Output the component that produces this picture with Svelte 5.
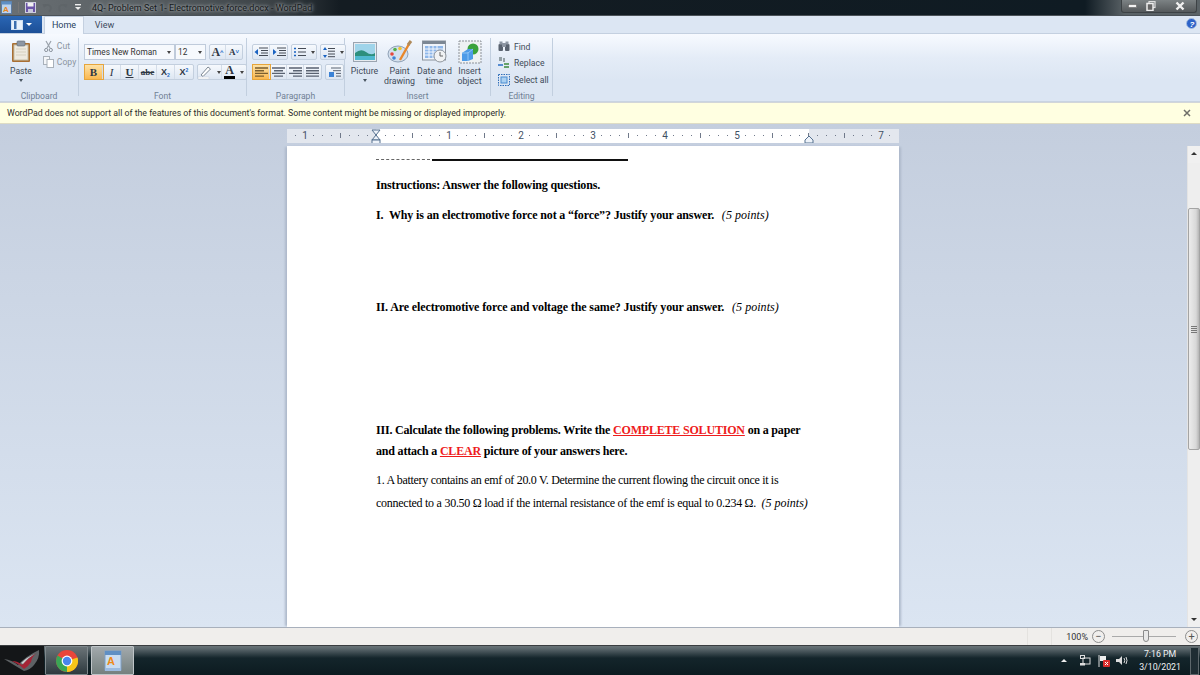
<script>
const clipboard = [
	{ label: 'Cut' },
	{ label: 'Copy' }
];
const insertItems = [
	{ id: 'picture', lines: ['Picture', '▾'] },
	{ id: 'paint', lines: ['Paint', 'drawing'] },
	{ id: 'date', lines: ['Date and', 'time'] },
	{ id: 'object', lines: ['Insert', 'object'] }
];
// ruler marks, in inches from left margin
const rulerMarks = [];
for (let i = -1.125; i < 7.2; i += 0.125) rulerMarks.push(i);
const rulerLabel = (m) => (Number.isInteger(m) && m !== 0 && m !== 6 ? String(Math.abs(m)) : null);
</script>

<div class="window">
	<header class="titlebar">
		<div class="qat">
			<svg width="11" height="13" viewBox="0 0 11 13"><rect x="0.5" y="0.5" width="10" height="12" fill="#bcd3ee" stroke="#5c7ca3"/><rect x="0.5" y="0.5" width="10" height="3" fill="#5f8fc4"/><text x="2" y="11" font-size="8" fill="#e8861d" font-family="Liberation Sans" font-weight="bold">A</text></svg>
			<span class="qsep"></span>
			<svg width="11" height="11" viewBox="0 0 11 11"><rect x="0.5" y="0.5" width="10" height="10" fill="#6b55a8" stroke="#cfcfe0"/><rect x="2.5" y="1" width="6" height="3.5" fill="#f2f2f2"/><rect x="3" y="7" width="5" height="3.5" fill="#c8c8dc"/></svg>
			<svg width="10" height="10" viewBox="0 0 10 10"><path d="M2.5 3 Q6 0.5 8.5 3.5 Q9.5 7 7 8.5" fill="none" stroke="#5f6569" stroke-width="1.8"/><path d="M0.5 1 L4.5 1 L2 5 Z" fill="#5f6569"/></svg>
			<svg width="10" height="10" viewBox="0 0 10 10"><path d="M7.5 3 Q4 0.5 1.5 3.5 Q0.5 7 3 8.5" fill="none" stroke="#5f6569" stroke-width="1.8"/><path d="M9.5 1 L5.5 1 L8 5 Z" fill="#5f6569"/></svg>
			<svg width="8" height="9" viewBox="0 0 8 9" class="qmore"><rect x="1" y="1" width="6" height="1.4" fill="#eee"/><path d="M1 4 L7 4 L4 7 Z" fill="#eee"/></svg>
			<span class="title">4Q- Problem Set 1- Electromotive force.docx - WordPad</span>
		</div>
		<div class="controls">
			<svg width="9" height="4" viewBox="0 0 9 4"><rect width="8" height="3" x="0.5" y="0.5" fill="#f2f2f2" stroke="#555" stroke-width="0.5"/></svg>
			<svg width="10" height="10" viewBox="0 0 10 10"><rect x="3" y="0.5" width="6" height="6" fill="none" stroke="#ddd" stroke-width="1.2"/><rect x="1" y="2.5" width="6" height="7" fill="#666" stroke="#eee" stroke-width="1.5"/></svg>
			<svg class="close" width="10" height="10" viewBox="0 0 10 10"><path d="M1.5 1.5 L8.5 8.5 M8.5 1.5 L1.5 8.5" stroke="#f0f0f0" stroke-width="2.4"/></svg>
		</div>
	</header>

	<nav class="tabs">
		<button class="file">
			<svg width="12" height="10" viewBox="0 0 12 10"><rect width="11" height="9" x="0.5" y="0.5" fill="#eaf2fb" stroke="#cfe0f2"/><rect x="3" y="1" width="2.5" height="8" fill="#3c6fae"/></svg>
			<span class="caret-w"></span>
		</button>
		<div class="tab active">Home</div>
		<div class="tab">View</div>
		<svg class="help" width="11" height="11" viewBox="0 0 11 11"><circle cx="5.5" cy="5.5" r="5" fill="#2c62c8" stroke="#a7bfe2"/><text x="3.5" y="8.5" font-size="8" font-weight="bold" font-style="italic" fill="#fff" font-family="Liberation Sans">?</text></svg>
	</nav>

	<section class="ribbon">
		<div class="group g-clip">
			<div class="group-body clip-body">
				<div class="paste">
					<svg width="20" height="23" viewBox="0 0 20 23"><rect x="1" y="3" width="18" height="19" rx="1" fill="#a96f33"/><rect x="3" y="5" width="14" height="15" fill="#eeeae0" stroke="#c6bfa8"/><rect x="6" y="1" width="8" height="5" rx="1" fill="#8d97a4" stroke="#5f6873" stroke-width="0.6"/><path d="M5 9h10M5 12h10M5 15h10" stroke="#d6d0bf"/></svg>
					<span class="ptext">Paste</span>
					<span class="caret"></span>
				</div>
				<div class="clip-list">
					{#each clipboard as c, i}
						<div class="clip-item">
							{#if i === 0}
								<svg width="9" height="12" viewBox="0 0 9 12"><path d="M2 1 L6 8 M7 1 L3 8" stroke="#9aa2ab" stroke-width="1.2"/><circle cx="2.2" cy="10" r="1.6" fill="none" stroke="#8a929c"/><circle cx="6.8" cy="10" r="1.6" fill="none" stroke="#8a929c"/></svg>
							{:else}
								<svg width="11" height="12" viewBox="0 0 11 12"><rect x="0.5" y="0.5" width="6" height="8" fill="#f4f6f9" stroke="#a9b1ba"/><rect x="4" y="3.5" width="6.5" height="8" fill="#fff" stroke="#a9b1ba"/></svg>
							{/if}
							<span>{c.label}</span>
						</div>
					{/each}
				</div>
			</div>
			<div class="group-name">Clipboard</div>
		</div>

		<div class="group g-font">
			<div class="group-body font-body">
				<div class="row">
					<div class="combo fontname">Times New Roman<span class="mini"></span></div>
					<div class="combo fontsize">12<span class="mini"></span></div>
					<div class="btns">
						<span class="b grow serif">A<sup>^</sup></span>
						<span class="b grow small serif">A<sup>˅</sup></span>
					</div>
				</div>
				<div class="row">
					<div class="btns">
						<span class="b on serif bold">B</span>
						<span class="b serif ital">I</span>
						<span class="b serif bold und">U</span>
						<span class="b serif strike">abe</span>
						<span class="b sub">X<small>2</small></span>
						<span class="b sup">X<small>2</small></span>
					</div>
					<div class="btns color">
						<span class="b wide">
							<svg width="14" height="13" viewBox="0 0 14 13"><path d="M3 9 L10 1 L12.5 3 L5 10.5 Z" fill="#fff" stroke="#7d8894"/><rect y="11" width="11" height="2" fill="#fff" stroke="#c5ccd6" stroke-width="0.5"/></svg>
							<span class="mini"></span>
						</span>
						<span class="b wide">
							<span class="colora">A</span>
							<span class="mini"></span>
						</span>
					</div>
				</div>
			</div>
			<div class="group-name">Font</div>
		</div>

		<div class="group g-para">
			<div class="group-body font-body">
				<div class="row">
					<div class="btns">
						<span class="b para"><svg width="14" height="10" viewBox="0 0 14 10"><path d="M5 1h9M7 3.5h7M7 6h7M5 8.5h9" stroke="#454b55"/><path d="M4 2 L0.5 5 L4 8 Z" fill="#1a63c2"/></svg></span>
						<span class="b para"><svg width="14" height="10" viewBox="0 0 14 10"><path d="M5 1h9M7 3.5h7M7 6h7M5 8.5h9" stroke="#454b55"/><path d="M1 2 L4.5 5 L1 8 Z" fill="#1a63c2"/></svg></span>
					</div>
					<div class="btns">
						<span class="b wide"><svg width="12" height="10" viewBox="0 0 12 10"><path d="M4 1.5h8M4 5h8M4 8.5h8" stroke="#454b55"/><path d="M0 1.5h2M0 5h2M0 8.5h2" stroke="#1a63c2" stroke-width="1.6"/></svg><span class="mini"></span></span>
					</div>
					<div class="btns">
						<span class="b wide"><svg width="12" height="11" viewBox="0 0 12 11"><path d="M5 1.5h7M5 4.2h7M5 7h7M5 9.7h7" stroke="#454b55"/><path d="M2 0 L4 3 H0 Z M2 11 L4 8 H0 Z" fill="#1a63c2"/></svg><span class="mini"></span></span>
					</div>
				</div>
				<div class="row">
					<div class="btns">
						<span class="b para on"><svg width="13" height="11" viewBox="0 0 13 11"><path d="M0 1h13M0 3.7h9M0 6.4h13M0 9.1h9" stroke="#7a5e30" stroke-width="1.4"/></svg></span>
						<span class="b para"><svg width="13" height="11" viewBox="0 0 13 11"><path d="M0 1h13M2 3.7h9M0 6.4h13M2 9.1h9" stroke="#596271" stroke-width="1.4"/></svg></span>
						<span class="b para"><svg width="13" height="11" viewBox="0 0 13 11"><path d="M0 1h13M4 3.7h9M0 6.4h13M4 9.1h9" stroke="#596271" stroke-width="1.4"/></svg></span>
						<span class="b para"><svg width="13" height="11" viewBox="0 0 13 11"><path d="M0 1h13M0 3.7h13M0 6.4h13M0 9.1h13" stroke="#596271" stroke-width="1.4"/></svg></span>
					</div>
					<div class="btns">
						<span class="b para"><svg width="13" height="11" viewBox="0 0 13 11"><path d="M3 1h10M5 3.7h8M8 6.4h5M8 9.1h5" stroke="#596271"/><rect x="1" y="5" width="5" height="5" fill="#3b82d6"/></svg></span>
					</div>
				</div>
			</div>
			<div class="group-name">Paragraph</div>
		</div>

		<div class="group g-insert">
			<div class="group-body insert-body">
				{#each insertItems as it}
					<div class="ins">
						{#if it.id === 'picture'}
							<svg width="24" height="20" viewBox="0 0 24 20"><rect x="0.5" y="0.5" width="23" height="19" fill="#e7ebf0" stroke="#9aa4b0"/><rect x="2" y="2" width="20" height="16" fill="#9fd4ea"/><path d="M2 11 Q8 6 13 10 T22 11 V18 H2 Z" fill="#2c8f7d"/><rect x="2" y="14" width="20" height="4" fill="#4fb8cf"/></svg>
						{:else if it.id === 'paint'}
							<svg width="26" height="24" viewBox="0 0 26 24"><ellipse cx="11" cy="14" rx="10" ry="8" fill="#d4e0ee" stroke="#8fa1b6"/><circle cx="5" cy="14" r="1.8" fill="#e5483c"/><circle cx="8" cy="9.5" r="1.8" fill="#54b04a"/><circle cx="13" cy="8.5" r="1.8" fill="#f2c431"/><circle cx="7" cy="18" r="1.8" fill="#3e83d6"/><path d="M13 20 L22 4" stroke="#e8862a" stroke-width="2.4"/><path d="M21 5 L24 1" stroke="#b08a5a" stroke-width="3"/></svg>
						{:else if it.id === 'date'}
							<svg width="26" height="24" viewBox="0 0 26 24"><rect x="0.5" y="1" width="23" height="19" fill="#eef3fa" stroke="#8a929c"/><rect x="1" y="1" width="22" height="3" fill="#7c8794"/><rect x="3" y="6" width="18" height="12" fill="#8eb7ea"/><path d="M3 9h18M3 12h18M3 15h18M7 6v12M11 6v12M15 6v12" stroke="#f3f7fd"/><circle cx="18" cy="16" r="6" fill="#f0f2f4" stroke="#8e959d"/><path d="M18 12v4h3" fill="none" stroke="#666"/></svg>
						{:else}
							<svg width="24" height="24" viewBox="0 0 24 24"><rect x="1" y="1" width="22" height="22" fill="#eef1f3" stroke="#8c9198" stroke-dasharray="2 1"/><circle cx="15" cy="9" r="5.5" fill="#3aa23c"/><path d="M4 13 L10 9 H15 V19 L10 21 H4 Z" fill="#4c9be8"/><path d="M10 12 V21 M4 13 H10 L15 9" stroke="#8fc4f5" fill="none"/></svg>
						{/if}
						<div class="ins-label">
							<span>{it.lines[0]}</span>
							{#if it.lines[1] === '▾'}
								<span class="caret"></span>
							{:else}
								<span>{it.lines[1]}</span>
							{/if}
						</div>
					</div>
				{/each}
			</div>
			<div class="group-name">Insert</div>
		</div>

		<div class="group g-edit">
			<div class="group-body edit-body">
				<div class="edit-item">
					<svg width="12" height="11" viewBox="0 0 12 11"><rect x="0.5" y="3" width="4.5" height="7" rx="1" fill="#59626f"/><rect x="7" y="3" width="4.5" height="7" rx="1" fill="#59626f"/><rect x="4" y="2" width="4" height="4" fill="#8c95a2"/><rect x="1.5" y="0.5" width="3" height="3" fill="#8c95a2"/><rect x="7.5" y="0.5" width="3" height="3" fill="#8c95a2"/></svg>
					<span>Find</span>
				</div>
				<div class="edit-item">
					<svg width="12" height="12" viewBox="0 0 12 12"><path d="M1 1h3M1 3h3M6 1v4" stroke="#455" /><path d="M0 8h5" stroke="#1a63c2" stroke-width="1.4"/><path d="M6 7h5M6 10h5" stroke="#3c8a3c" stroke-width="1.6"/></svg>
					<span>Replace</span>
				</div>
				<div class="edit-item">
					<svg width="12" height="12" viewBox="0 0 12 12"><rect x="0.5" y="0.5" width="11" height="11" fill="none" stroke="#2d6cb8" stroke-dasharray="1.5 1"/><rect x="3" y="3" width="6" height="6" fill="#a9d0f2" stroke="#4a8cd0"/></svg>
					<span>Select all</span>
				</div>
			</div>
			<div class="group-name">Editing</div>
		</div>
	</section>

	<div class="notice">
		<span>WordPad does not support all of the features of this document's format. Some content might be missing or displayed improperly.</span>
		<svg width="8" height="8" viewBox="0 0 8 8"><path d="M1 1 L7 7 M7 1 L1 7" stroke="#6e6e68" stroke-width="1.5"/></svg>
	</div>

	<main class="workspace">
		<div class="docarea">
			<div class="ruler-row">
				<div class="ruler">
					<span class="white"></span>
					{#each rulerMarks as m}
						{@const lab = rulerLabel(m)}
						<span class="tick" class:num={lab} class:half={!lab && m % 0.5 === 0} style="left: {89 + m * 72}px">{lab ?? ''}</span>
					{/each}
					<svg class="marker lm" width="10" height="18" viewBox="0 0 10 18"><path d="M1 1h8L5 6z" fill="#eef3fa" stroke="#55708f"/><path d="M1 11L5 6l4 5z" fill="#eef3fa" stroke="#55708f"/><rect x="1" y="11" width="8" height="5" fill="#eef3fa" stroke="#55708f"/></svg>
					<svg class="marker rm" width="10" height="9" viewBox="0 0 10 9"><path d="M1 8V5l4-4 4 4v3z" fill="#eef3fa" stroke="#55708f"/></svg>
				</div>
			</div>
			<div class="page">
				<div class="pagetext">
					<div class="rule"><span class="dash"></span><span class="line"></span></div>
					<p class="b1 p-ins">Instructions: Answer the following questions.</p>
					<p class="b1 p-q1">I.&nbsp; Why is an electromotive force not a “force”? Justify your answer.&nbsp; <em>(5 points)</em></p>
					<p class="b1 p-q2">II. Are electromotive force and voltage the same? Justify your answer.&nbsp; <em>(5 points)</em></p>
					<p class="b1 p-q3">III. Calculate the following problems. Write the <u>COMPLETE SOLUTION</u> on a paper</p>
					<p class="b1 p-q3b">and attach a <u>CLEAR</u> picture of your answers here.</p>
					<p class="n p-1">1. A battery contains an emf of 20.0 V. Determine the current flowing the circuit once it is</p>
					<p class="n p-2">connected to a 30.50 Ω load if the internal resistance of the emf is equal to 0.234 Ω.&nbsp; <em>(5 points)</em></p>
				</div>
			</div>
		</div>
		<aside class="scrollbar">
			<span class="arrow up"></span>
			<div class="track">
				<div class="thumb"><span class="grip"></span></div>
			</div>
			<span class="arrow down"></span>
		</aside>
	</main>

	<footer class="status">
		<span class="cell c1"></span>
		<span class="cell c2"></span>
		<span class="pct">100%</span>
		<span class="circ">−</span>
		<div class="slider"><span class="knob"></span></div>
		<span class="circ">+</span>
	</footer>

	<div class="taskbar">
		<div class="start">
			<svg width="36" height="22" viewBox="0 0 36 22"><path d="M0 9 Q8 10 14 15 Q22 6 35 0 Q36 8 30 15 Q26 20 20 21 Q10 15 0 9 Z" fill="#5e6265"/><path d="M8 11 Q14 11 18 15 Q24 8 33 3 Q28 6 27 12 Q24 17 20 19 Q15 14 8 11 Z" fill="#a42536"/><path d="M17 13 Q23 7 31 4 Q26 6 19 14 Z" fill="#c9ccce"/></svg>
		</div>
		<div class="task">
			<svg width="22" height="22" viewBox="0 0 22 22">
				<circle cx="11" cy="11" r="11" fill="#e8453a"/>
				<path d="M11 11 L1.5 5.5 A11 11 0 0 0 11 22 Z" fill="#3aa655"/>
				<path d="M11 11 L21.5 7.5 A11 11 0 0 1 11 22 Z" fill="#f6c619"/>
				<circle cx="11" cy="11" r="5.4" fill="#fff"/>
				<circle cx="11" cy="11" r="4.2" fill="#4a85ee"/>
			</svg>
		</div>
		<div class="task active">
			<svg width="18" height="22" viewBox="0 0 18 22"><rect x="1" y="1" width="16" height="19" fill="#c9dcf1" stroke="#7fa0c6"/><rect x="1" y="1" width="16" height="4" fill="#5f8fc4"/><text x="3" y="15" font-size="11" font-weight="bold" fill="#ee8a17" font-family="Liberation Sans">A</text><rect x="1" y="18" width="16" height="3" fill="#9cbbe0"/></svg>
		</div>
		<div class="tray">
			<span class="tray-up"></span>
			<svg width="12" height="11" viewBox="0 0 12 11"><rect x="0.5" y="0.5" width="4" height="3" fill="none" stroke="#ddd"/><rect x="3" y="3" width="7" height="6" fill="none" stroke="#ddd"/><rect x="0" y="8" width="5" height="2.5" fill="#ddd"/></svg>
			<svg width="12" height="12" viewBox="0 0 12 12"><path d="M1 0v12" stroke="#ddd"/><path d="M2 1h6v5H2z" fill="#eee"/><rect x="5" y="5" width="7" height="7" rx="1" fill="#d82c2c"/><path d="M7 7l3 3M10 7l-3 3" stroke="#fff"/></svg>
			<svg width="12" height="11" viewBox="0 0 12 11"><path d="M0 4h3l3-3v9L3 7H0z" fill="#ddd"/><path d="M8 3q1.5 2.5 0 5M10 2q2 3.5 0 7" stroke="#ddd" fill="none"/></svg>
			<div class="clock"><span>7:16 PM</span><span>3/10/2021</span></div>
			<span class="showdesk"></span>
		</div>
	</div>
</div>

<style>
:global(body) {
	margin: 0;
	overflow: hidden;
}

.window {
	width: 1200px;
	height: 675px;
	display: flex;
	flex-direction: column;
	font-family: Roboto, "Noto Sans", sans-serif;
	overflow: hidden;
	background: #dce6f3;
}

.titlebar {
	height: 16px;
	flex: none;
	display: flex;
	justify-content: space-between;
	background: linear-gradient(90deg, #6a7074 0, #5c6266 120px, #3c4246 270px, #141c22 340px, #0f1b23 1085px, #5a6266 1125px);
	border-bottom: 1px solid #4b5258;
	box-sizing: border-box;
}

.qat {
	display: flex;
	align-items: center;
	gap: 6px;
	padding-left: 1px;
}

.qsep {
	width: 1px;
	height: 11px;
	background: #777;
}

.qmore {
	margin-right: 4px;
}

.title {
	font-size: 9px;
	color: #16191b;
	text-shadow: 0 0 3px #a8aeb2, 0 0 5px #a8aeb2;
	white-space: nowrap;
}

.controls {
	width: 76px;
	height: 13px;
	margin-right: 3px;
	display: flex;
	align-items: center;
	gap: 9px;
	padding-left: 6px;
	box-sizing: border-box;
	background: linear-gradient(180deg, #7c8284, #55595b);
	border: 1px solid #3d4245;
	border-top: 0;
	border-radius: 0 0 3px 3px;
}

.close {
	margin-left: 10px;
}

.tabs {
	height: 18px;
	flex: none;
	display: flex;
	align-items: stretch;
	background: #dce6f3;
	position: relative;
	border-bottom: 1px solid #c4d0e0;
	box-sizing: border-box;
}

.file {
	width: 42px;
	border: 0;
	padding: 0;
	display: flex;
	align-items: center;
	justify-content: center;
	gap: 3px;
	background: linear-gradient(180deg, #2a66b4, #1c4f97);
}

.caret-w {
	border: 3px solid transparent;
	border-top: 3px solid #fff;
	border-bottom: 0;
}

.tab {
	width: 41px;
	font-size: 9px;
	line-height: 18px;
	text-align: center;
	color: #3c4a5c;
}

.tab.active {
	width: 40px;
	margin-left: 2px;
	background: #f4f8fe;
	color: #27405f;
	border: 1px solid #c4d0e0;
	border-bottom: 0;
	box-sizing: border-box;
	height: 18px;
	line-height: 16px;
}

.help {
	position: absolute;
	right: 3px;
	top: 2px;
}

.ribbon {
	height: 68px;
	flex: none;
	display: flex;
	background: linear-gradient(180deg, #f7faff 0, #e4ecf7 24px, #dce6f3 46px);
	border-bottom: 1px solid #c9d4e2;
	box-sizing: border-box;
}

.group {
	display: flex;
	flex-direction: column;
	border-right: 1px solid #c2cfdf;
	margin: 4px 0 5px;
	box-sizing: border-box;
	color: #43505f;
}

.group-body {
	flex: 1;
	min-height: 0;
}

.group-name {
	font-size: 8.6px;
	line-height: 12px;
	margin-bottom: -6px;
	text-align: center;
	color: #6f7f93;
}

.g-clip { width: 79px; }
.g-font { width: 168px; }
.g-para { width: 98px; }
.g-insert { width: 146px; }
.g-edit { width: 62px; }

.clip-body {
	display: flex;
	padding: 2px 0 0 10px;
	gap: 11px;
}

.paste {
	display: flex;
	flex-direction: column;
	align-items: center;
	font-size: 8.6px;
	gap: 0;
}

.ptext {
	margin-top: 3px;
	color: #3f4b59;
}

.caret {
	display: block;
	width: 0;
	border: 2px solid transparent;
	border-top: 3px solid #4a5560;
	border-bottom: 0;
	margin: 3px auto 0;
}

.clip-list {
	display: flex;
	flex-direction: column;
	gap: 4px;
	font-size: 8.6px;
	color: #8b95a1;
}

.clip-item {
	display: flex;
	align-items: center;
	gap: 3px;
	height: 12px;
}

.clip-item svg {
	width: 11px;
}

.font-body {
	display: flex;
	flex-direction: column;
	gap: 4px;
	padding: 6px 0 0 5px;
}

.row {
	display: flex;
	gap: 3px;
	height: 16px;
}

.combo {
	font-size: 8.3px;
	line-height: 15px;
	background: #f6f9fd;
	border: 1px solid #bfcbdb;
	box-sizing: border-box;
	padding-left: 2px;
	color: #333;
	position: relative;
}

.fontname {
	width: 91px;
}

.fontsize {
	width: 31px;
	margin-left: -3px;
}

.mini {
	display: inline-block;
	width: 0;
	border: 2px solid transparent;
	border-top: 3px solid #444;
	border-bottom: 0;
	margin-left: 3px;
	vertical-align: middle;
}

.combo .mini {
	position: absolute;
	right: 3px;
	top: 6px;
}

.btns {
	display: flex;
	border: 1px solid #c3cfde;
	border-radius: 2px;
	background: linear-gradient(180deg, #f6f9fd, #dde6f2);
	box-sizing: border-box;
	height: 16px;
}

.b {
	display: flex;
	align-items: center;
	justify-content: center;
	width: 18px;
	font-size: 10px;
	color: #2e3744;
	border-right: 1px solid #d3dce8;
	box-sizing: border-box;
	flex: none;
}

.b:last-child {
	border-right: 0;
}

.serif {
	font-family: "Liberation Serif", serif;
}

.bold {
	font-weight: bold;
	font-size: 11px;
}

.ital {
	font-style: italic;
	font-size: 11px;
}

.und {
	text-decoration: underline;
}

.strike {
	font-size: 9px;
	text-decoration: line-through;
	font-weight: bold;
}

.on {
	background: linear-gradient(180deg, #fde2a7, #fbb84f);
	outline: 1px solid #e6a53c;
}

.grow {
	font-size: 12px;
	font-weight: bold;
	width: 16px;
}

.grow.small {
	font-size: 9px;
}

.grow sup {
	font-size: 6px;
	color: #2068c4;
	line-height: 0;
	font-family: "Liberation Sans", sans-serif;
}

.sub, .sup {
	font-family: "Liberation Sans", sans-serif;
	font-weight: bold;
	font-size: 9px;
}

.sub small, .sup small {
	font-size: 5px;
	color: #2068c4;
}

.sub small {
	margin-top: 5px;
}

.sup small {
	margin-bottom: 5px;
}

.wide {
	width: 24px;
	gap: 2px;
}

.para {
	width: 17px;
}

.colora {
	font-family: "Liberation Serif", serif;
	font-weight: bold;
	font-size: 12px;
	line-height: 11px;
	border-bottom: 3px solid #000;
	width: 11px;
	text-align: center;
}

.insert-body {
	display: flex;
	padding: 2px 0 0 2px;
	gap: 0;
}

.ins {
	width: 35px;
	display: flex;
	flex-direction: column;
	align-items: center;
	height: 50px;
	justify-content: flex-start;
}

.ins svg {
	height: 24px;
	flex: none;
}

.ins-label {
	display: flex;
	flex-direction: column;
	align-items: center;
	font-size: 8.8px;
	line-height: 10px;
	white-space: nowrap;
	color: #3f4b59;
	margin-top: 2px;
}

.edit-body {
	display: flex;
	flex-direction: column;
	gap: 3.5px;
	padding: 2px 0 0 7px;
}

.edit-item {
	display: flex;
	align-items: center;
	gap: 4px;
	height: 13px;
	font-size: 8.6px;
	color: #3f4b59;
	white-space: nowrap;
}

.notice {
	height: 22px;
	flex: none;
	display: flex;
	align-items: center;
	justify-content: space-between;
	padding: 0 9px 0 7px;
	box-sizing: border-box;
	background: #ffffe1;
	border-top: 1px solid #d2d6d9;
	border-bottom: 1px solid #dedcc4;
	font-size: 8.75px;
	color: #2c2c2c;
}

.workspace {
	flex: 1;
	min-height: 0;
	display: flex;
	background: linear-gradient(180deg, #c4cede, #dbe5f2);
}

.docarea {
	flex: 1;
	min-width: 0;
	display: flex;
	flex-direction: column;
	align-items: center;
	padding-right: 1px;
}

.ruler-row {
	height: 22px;
	flex: none;
	padding-top: 5px;
	box-sizing: border-box;
}

.ruler {
	width: 612px;
	height: 14px;
	position: relative;
	background: #e3e7ee;
	overflow: hidden;
}

.white {
	position: absolute;
	left: 89px;
	width: 433px;
	top: 0;
	height: 14px;
	background: #fff;
}

.tick {
	position: absolute;
	top: 6px;
	width: 1px;
	height: 1px;
	background: #70798a;
}

.tick.half {
	top: 4px;
	height: 5px;
}

.tick.num {
	top: 0;
	height: 14px;
	width: 10px;
	margin-left: -4px;
	background: none;
	text-align: center;
	font-size: 10px;
	line-height: 14px;
	color: #3f5064;
}

.marker {
	position: absolute;
}

.lm {
	left: 84px;
	top: 0;
}

.rm {
	left: 517px;
	top: 6px;
}

.page {
	width: 612px;
	flex: 1;
	min-height: 0;
	background: #fff;
	box-shadow: -3px 0 2px -1px #aeb9cb, 3px 0 2px -1px #aeb9cb;
	overflow: hidden;
}

.pagetext {
	padding: 0 0 0 89px;
	font-family: "Liberation Serif", serif;
	font-size: 12px;
	color: #000;
	white-space: nowrap;
}

.pagetext p {
	margin: 0;
	line-height: 16px;
}

.rule {
	height: 15px;
	display: flex;
	align-items: flex-end;
}

.dash {
	width: 54px;
	height: 0;
	border-bottom: 1px dashed #666;
	margin: 0 2px 1px 0;
}

.line {
	width: 196px;
	height: 2px;
	background: #111;
}

.b1 {
	font-weight: bold;
	letter-spacing: -0.19px;
}

.b1 em {
	font-weight: normal;
	letter-spacing: 0.05px;
	margin-left: 2px;
}

.b1 u {
	color: #ee1c1c;
	text-decoration-thickness: 1px;
}

.n {
	letter-spacing: -0.31px;
}

.n em {
	letter-spacing: 0;
}

.pagetext .p-ins { margin-top: 16px; letter-spacing: -0.15px; }
.pagetext .p-q1 { margin-top: 14px; letter-spacing: -0.13px; }
.pagetext .p-q2 { margin-top: 76px; letter-spacing: -0.12px; }
.pagetext .p-q3 { margin-top: 107px; }
.pagetext .p-q3b { margin-top: 5px; }
.pagetext .p-1 { margin-top: 13px; }
.pagetext .p-2 { margin-top: 7px; letter-spacing: -0.26px; }

.scrollbar {
	width: 13px;
	flex: none;
	margin-top: 22px;
	display: flex;
	flex-direction: column;
	background: #eeeeee;
	border-left: 1px solid #e4e4e4;
	box-sizing: border-box;
}

.arrow {
	height: 17px;
	flex: none;
	position: relative;
	background: #f0f0f0;
}

.arrow::after {
	content: "";
	position: absolute;
	left: 3px;
	border: 3px solid transparent;
}

.arrow.up::after {
	top: 6px;
	border-bottom: 3px solid #333;
	border-top: 0;
}

.arrow.down::after {
	top: 8px;
	border-top: 3px solid #333;
	border-bottom: 0;
}

.track {
	flex: 1;
	padding-top: 45px;
}

.thumb {
	height: 242px;
	background: linear-gradient(90deg, #ececec, #d8d8d8 70%, #b5b5b5);
	border: 1px solid #a4a4a4;
	border-radius: 2px;
	box-sizing: border-box;
	display: flex;
	align-items: center;
	justify-content: center;
}

.grip {
	width: 6px;
	height: 7px;
	background: repeating-linear-gradient(180deg, #777 0 1px, transparent 1px 2px);
}

.status {
	height: 18px;
	flex: none;
	position: relative;
	display: flex;
	align-items: center;
	justify-content: flex-end;
	gap: 4px;
	padding-right: 2px;
	box-sizing: border-box;
	background: #f0eeec;
	border-top: 1px solid #a8b0bc;
	font-size: 9px;
	color: #333;
}

.cell {
	position: absolute;
	top: 0;
	bottom: 0;
	width: 1px;
	background: #e4e2df;
}

.c1 { left: 1027px; }
.c2 { left: 1051px; }

.circ {
	width: 11px;
	height: 11px;
	border: 1px solid #8d8d8d;
	border-radius: 50%;
	display: flex;
	align-items: center;
	justify-content: center;
	font-size: 11px;
	line-height: 1;
	color: #555;
}

.slider {
	width: 64px;
	height: 1px;
	background: #aaa;
	position: relative;
	margin: 0 5px 0 3px;
}

.knob {
	position: absolute;
	left: 31px;
	top: -6px;
	width: 6px;
	height: 12px;
	border: 1px solid #8a8a8a;
	border-radius: 1px 1px 3px 3px;
	background: #e8e8e8;
	box-sizing: border-box;
}

.taskbar {
	height: 30px;
	flex: none;
	display: flex;
	align-items: stretch;
	background: linear-gradient(180deg, #6a7478 0, #59656a 3px, #14252b 12px, #0c1b20 100%);
	border-top: 1px solid #3a3d40;
	box-sizing: border-box;
}

.start {
	width: 44px;
	display: flex;
	align-items: center;
	justify-content: center;
	background: #141618;
}

.task {
	width: 43px;
	margin-left: 1px;
	display: flex;
	align-items: center;
	justify-content: center;
	background: linear-gradient(180deg, #6a7377, #2e3a3f);
	border: 1px solid #7f888c;
	border-radius: 1px;
	box-sizing: border-box;
}

.task.active {
	margin-left: 3px;
	background: linear-gradient(180deg, #a2a9ac, #75807f);
	border-color: #bfc5c8;
}

.tray {
	margin-left: auto;
	display: flex;
	align-items: center;
	gap: 6px;
	color: #f0f2f4;
}

.tray-up {
	border: 3px solid transparent;
	border-bottom: 3px solid #eee;
	border-top: 0;
	margin-right: 7px;
}

.clock {
	display: flex;
	flex-direction: column;
	align-items: center;
	font-size: 8.8px;
	line-height: 13px;
	margin-left: 5px;
	margin-right: 3px;
}

.showdesk {
	width: 9px;
	height: 28px;
	border: 1px solid #5d676b;
	box-sizing: border-box;
	background: #1f2d33;
	margin-right: 1px;
}
</style>
